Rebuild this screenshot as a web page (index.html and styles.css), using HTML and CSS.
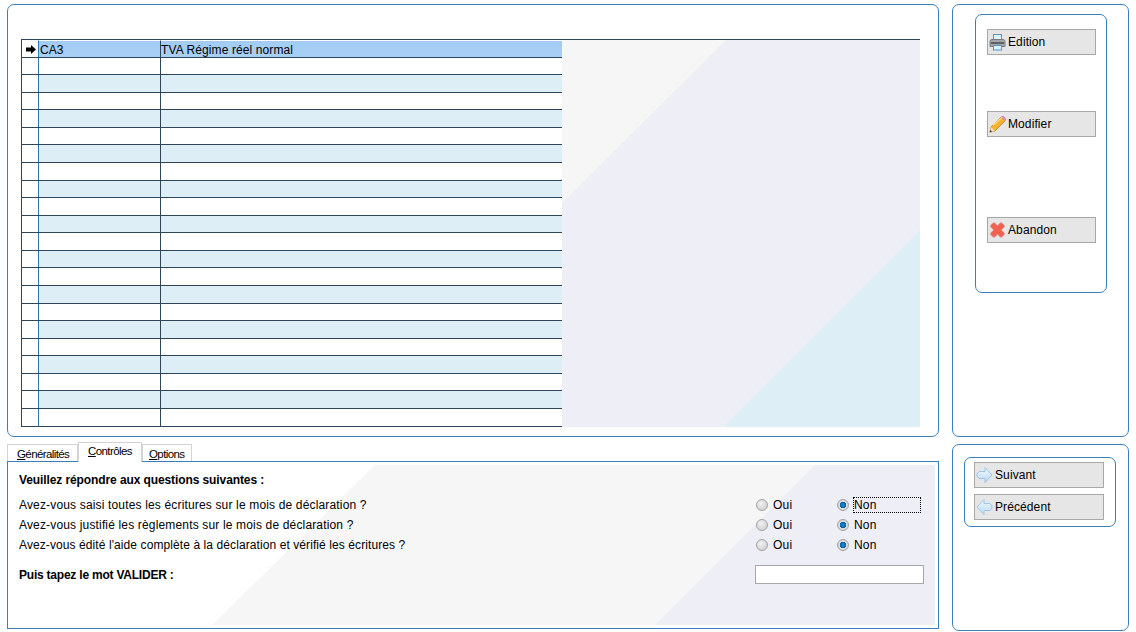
FILE: index.html
```html
<!DOCTYPE html>
<html lang="fr">
<head>
<meta charset="utf-8">
<title>Déclaration TVA</title>
<link rel="stylesheet" href="styles.css">
</head>
<body>
<div class="app">
  <section class="panel main-panel">
    <div class="grid-wrap">
      <svg class="grid-art" viewBox="0 0 358 387" preserveAspectRatio="none" aria-hidden="true">
        <rect width="358" height="387" fill="#eeeef7"/>
        <polygon points="0,0 164,0 0,163" fill="#f6f6f6"/>
        <polygon points="358,190 358,387 161,387" fill="#deeef7"/>
      </svg>
      <div class="grid">
        <div class="row head"><div class="c0"><svg class="cur" viewBox="0 0 10 9"><path d="M0 2.500h5V0l5 4.500L5 9V6.500H0z" fill="#000"/></svg></div><div class="c1">CA3</div><div class="c2">TVA Régime réel normal</div></div>
        <div class="row"><div class="c0"></div><div class="c1"></div><div class="c2"></div></div>
        <div class="row alt"><div class="c0"></div><div class="c1"></div><div class="c2"></div></div>
        <div class="row"><div class="c0"></div><div class="c1"></div><div class="c2"></div></div>
        <div class="row alt"><div class="c0"></div><div class="c1"></div><div class="c2"></div></div>
        <div class="row"><div class="c0"></div><div class="c1"></div><div class="c2"></div></div>
        <div class="row alt"><div class="c0"></div><div class="c1"></div><div class="c2"></div></div>
        <div class="row"><div class="c0"></div><div class="c1"></div><div class="c2"></div></div>
        <div class="row alt"><div class="c0"></div><div class="c1"></div><div class="c2"></div></div>
        <div class="row"><div class="c0"></div><div class="c1"></div><div class="c2"></div></div>
        <div class="row alt"><div class="c0"></div><div class="c1"></div><div class="c2"></div></div>
        <div class="row"><div class="c0"></div><div class="c1"></div><div class="c2"></div></div>
        <div class="row alt"><div class="c0"></div><div class="c1"></div><div class="c2"></div></div>
        <div class="row"><div class="c0"></div><div class="c1"></div><div class="c2"></div></div>
        <div class="row alt"><div class="c0"></div><div class="c1"></div><div class="c2"></div></div>
        <div class="row"><div class="c0"></div><div class="c1"></div><div class="c2"></div></div>
        <div class="row alt"><div class="c0"></div><div class="c1"></div><div class="c2"></div></div>
        <div class="row"><div class="c0"></div><div class="c1"></div><div class="c2"></div></div>
        <div class="row alt"><div class="c0"></div><div class="c1"></div><div class="c2"></div></div>
        <div class="row"><div class="c0"></div><div class="c1"></div><div class="c2"></div></div>
        <div class="row alt"><div class="c0"></div><div class="c1"></div><div class="c2"></div></div>
        <div class="row"><div class="c0"></div><div class="c1"></div><div class="c2"></div></div>
      </div>
    </div>
  </section>

  <section class="panel side-panel">
    <div class="panel inner-actions">
      <button class="btn"><svg class="ico" viewBox="0 0 17 18"><rect x="4.500" y="1.500" width="8" height="6" fill="#e2f2fc" stroke="#4f97d2"/><path d="M1 8.500q0-2 2-2h11q2 0 2 2v5H1z" fill="#a3a7ab" stroke="#777c82"/><rect x="2" y="9" width="13" height="2" fill="#5e6368"/><rect x="4.500" y="12.500" width="8" height="4.500" fill="#e6f3fc" stroke="#4f97d2"/></svg>Edition</button>
      <button class="btn"><svg class="ico" viewBox="0 0 17 18"><path d="M.800 17.200l1.300-5.300L12.200 1.800l3.900 3.900L6 15.900z" fill="#f7b32e" stroke="#b9791a" stroke-width=".8"/><path d="M4 10.200l8.800-7.800" stroke="#fde39c" stroke-width="1.200"/><path d="M12.200 1.800l3.900 3.900 .6-.7a1.500 1.500 0 0 0 0-2.100L15 1.200a1.500 1.500 0 0 0-2.100 0z" fill="#d98bc4"/><path d="M.800 17.200l1.300-5.300 3.900 4z" fill="#f7e0ba"/><path d="M.800 17.200l.6-2.300 1.700 1.700z" fill="#333"/></svg>Modifier</button>
      <button class="btn"><svg class="ico" viewBox="0 0 17 18"><path d="M4 2.200Q5 1.500 6 2.200L8.500 5 11 2.200q1-.7 2 0l2 2q.7 1 0 2L12.200 9l2.800 2.800q.7 1 0 2l-2 2q-1 .7-2 0L8.500 13 6 15.800q-1 .7-2 0l-2-2q-.7-1 0-2L4.800 9 2 6.200q-.7-1 0-2z" fill="#f2604f" stroke="#d9837a" stroke-width=".8"/></svg>Abandon</button>
    </div>
  </section>

  <section class="tabs-area">
    <div class="tabs">
      <span class="tab"><u>G</u>énéralités</span>
      <span class="tab active"><u>C</u>ontrôles</span>
      <span class="tab"><u>O</u>ptions</span>
    </div>
    <div class="tab-body">
      <svg class="tab-art" viewBox="0 0 927 160" preserveAspectRatio="none" aria-hidden="true">
        <polygon points="204,160 367,0 927,0 927,160" fill="#f6f6f6"/>
        <polygon points="647,160 807,0 927,0 927,160" fill="#eeeef7"/>
      </svg>
      <div class="form">
        <h2 class="title">Veuillez répondre aux questions suivantes :</h2>
        <div class="q q1"><span class="q-text">Avez-vous saisi toutes les écritures sur le mois de déclaration ?</span><span class="opt"><i class="radio"></i>Oui</span><span class="opt"><i class="radio on"></i><span class="focus">Non</span></span></div>
        <div class="q q2"><span class="q-text">Avez-vous justifié les règlements sur le mois de déclaration ?</span><span class="opt"><i class="radio"></i>Oui</span><span class="opt"><i class="radio on"></i>Non</span></div>
        <div class="q q3"><span class="q-text">Avez-vous édité l'aide complète à la déclaration et vérifié les écritures ?</span><span class="opt"><i class="radio"></i>Oui</span><span class="opt"><i class="radio on"></i>Non</span></div>
        <div class="valid"><strong class="valid-label">Puis tapez le mot VALIDER :</strong><input class="field" type="text"></div>
      </div>
    </div>
  </section>

  <section class="panel side-panel lower">
    <div class="panel inner-nav">
      <button class="btn nav"><svg class="ico" viewBox="0 0 17 18"><defs><linearGradient id="arrow-fill" x1="0" y1="0" x2="0" y2="1"><stop offset="0" stop-color="#f2f8fe"/><stop offset="1" stop-color="#bcd9f3"/></linearGradient></defs><path d="M3 5.500h6V1.500l7 7.500-7 7.500v-4H3L1 10V8z" fill="url(#arrow-fill)" stroke="#9cc5ea"/></svg>Suivant</button>
      <button class="btn nav"><svg class="ico" viewBox="0 0 17 18"><path d="M14 5.500H8V1.500L1 9l7 7.500v-4h6l2-2.500V8z" fill="url(#arrow-fill)" stroke="#9cc5ea"/></svg>Précédent</button>
    </div>
  </section>
</div>
</body>
</html>
```
FILE: styles.css
```css
* { box-sizing: border-box; }
html, body { margin: 0; padding: 0; background: #fff; }
body { width: 1136px; height: 632px; overflow: hidden; font-family: "Liberation Sans", Arial, sans-serif; font-size: 12px; color: #000; }
.app { display: grid; grid-template-columns: 932px 177px; grid-template-rows: 433px 187px; column-gap: 13px; row-gap: 7px; padding: 4px 0 0 7px; }
.panel { border: 1px solid #3a7fbd; border-radius: 7px; background: #fff; }
.main-panel { padding: 34px 18px 0 13px; }
.grid-wrap { position: relative; width: 899px; height: 388px; border-top: 1px solid #2f4558; }
.grid-art { position: absolute; left: 541px; top: 0; width: 358px; height: 387px; display: block; }
.grid { position: relative; width: 541px; }
.row { display: grid; grid-template-columns: 17px 122px 402px; height: 17.59px; border-bottom: 1px solid #2f4558; background: #fff; }
.row.alt > .c1, .row.alt > .c2 { background: #deeef7; }
.row.head { height: 17.5px; grid-template-rows: 16.5px; }
.row.head > .c0 { padding-top: 2px; }
.row.head > .c1, .row.head > .c2 { background: linear-gradient(#a2ccf4, #a9d0f6); border-top: 1px solid #fff; padding-top: 2px; line-height: 15px; white-space: nowrap; }
.c0 { border-left: 1px solid #2f4558; display: flex; align-items: center; justify-content: center; background: #fff; }
.c1 { border-left: 1px solid #2f74b5; padding-left: 1px; }
.c2 { border-left: 1px solid #2f4558; letter-spacing: .1px; }
.cur { width: 10px; height: 9px; display: block; margin-left: 1px; }
.side-panel { padding: 9px 22px 0 22px; }
.inner-actions { width: 132px; height: 279px; padding: 14px 10px 0 11px; display: flex; flex-direction: column; }
.btn { display: flex; align-items: center; gap: 2px; width: 109px; height: 26px; padding: 0 0 0 1px; border: 1px solid #a8a8a8; border-radius: 0; background: #e6e6e6; font: 12px "Liberation Sans", Arial, sans-serif; letter-spacing: .1px; color: #000; text-align: left; }
.inner-actions .btn:nth-child(2) { margin-top: 56px; }
.inner-actions .btn:nth-child(3) { margin-top: 80px; }
.ico { width: 17px; height: 18px; display: block; flex: none; }
.lower { padding: 12px 11px 0 11px; }
.inner-nav { width: 152px; height: 70px; padding: 4px 0 0 9px; display: flex; flex-direction: column; gap: 6px; }
.btn.nav { width: 130px; }
.tabs-area { position: relative; display: flex; flex-direction: column; }
.tabs { display: flex; align-items: flex-end; height: 17px; position: relative; z-index: 1; }
.tab { display: block; height: 17px; padding: 2px 0 0 9px; width: 71px; border: 1px solid #d4d4d4; border-bottom: 0; background: #fff; font-size: 11.5px; line-height: 15px; letter-spacing: -.6px; }
.tab.active { width: 64px; height: 20px; margin-bottom: -1px; line-height: 14px; padding: 1px 0 0 9px; }
.tab:nth-child(3) { width: 50px; padding-left: 6px; }
.tab-body { position: relative; height: 168px; border: 1px solid #3a7fbd; background: #fff; }
.tab-art { position: absolute; left: 0; top: 3px; width: 927px; height: 160px; }
.form { position: relative; padding: 10px 0 0 11px; }
.title { margin: 0 0 7px; font-size: 12px; line-height: 16px; font-weight: bold; letter-spacing: -.1px; }
.q { display: flex; align-items: center; height: 20px; }
.q-text { width: 737px; flex: none; }
.q1 .q-text, .q2 .q-text { letter-spacing: .16px; }
.q3 .q-text { letter-spacing: .09px; }
.opt { display: flex; align-items: center; width: 81px; flex: none; letter-spacing: .2px; }
.radio { width: 12px; height: 12px; margin-right: 5px; border-radius: 50%; border: 1px solid #a4a4a4; background: radial-gradient(circle at 40% 35%, #f2f2f2, #c8c8c8); display: block; flex: none; }
.radio.on { background: radial-gradient(circle, #1c8ad6 0, #0a62a8 3px, #dcdcdc 3.500px, #cfcfcf 100%); }
.focus { display: block; flex: none; outline: 1px dotted #000; width: 66px; line-height: 14px; }
.valid { display: flex; align-items: center; height: 20px; margin-top: 10px; }
.valid-label { width: 736px; flex: none; letter-spacing: -.22px; }
.field { width: 169px; height: 19px; margin: -2px 0 0; border: 1px solid #a8a8a8; background: #fff; padding: 0; border-radius: 0; }
```
